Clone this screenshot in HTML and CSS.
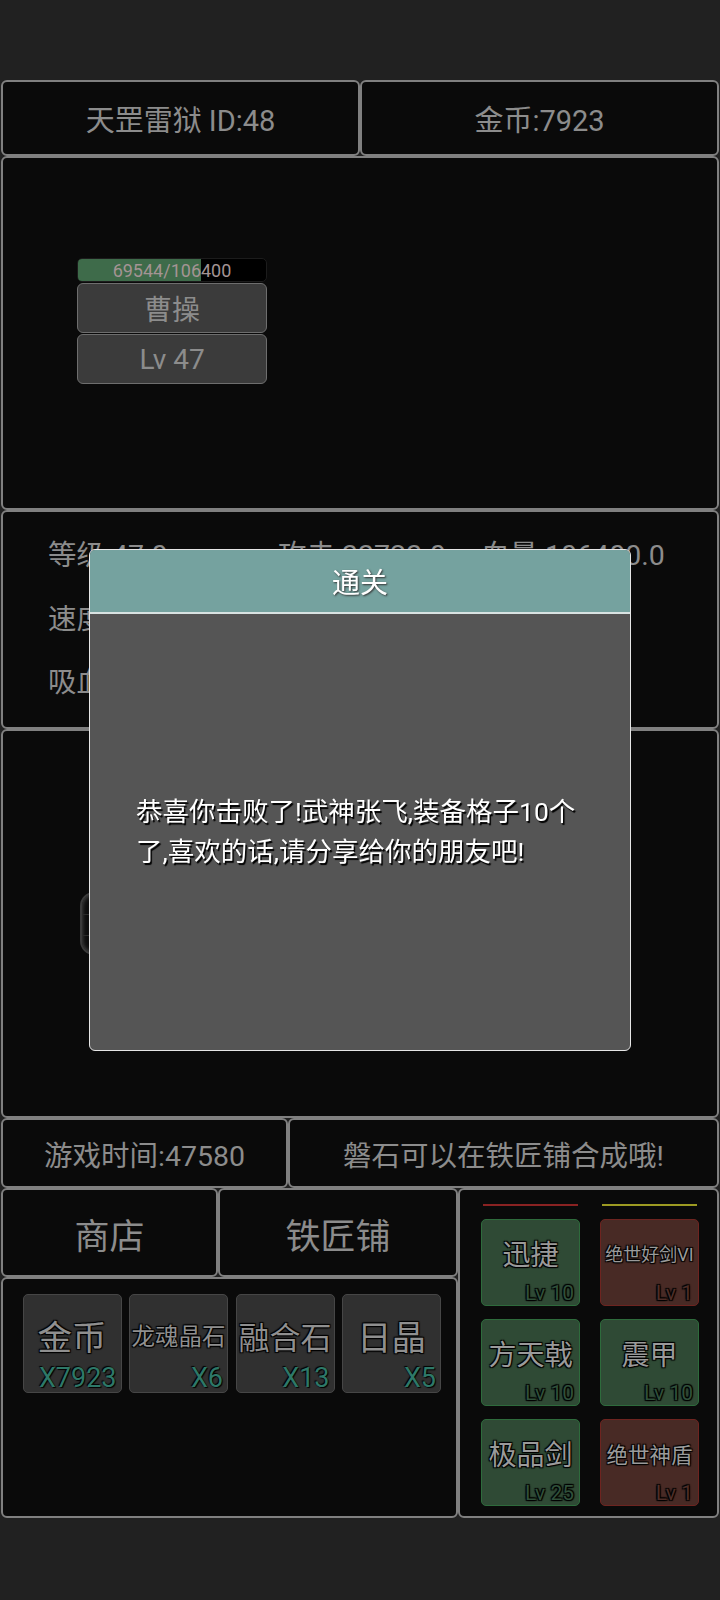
FILE: index.html
```html
<!DOCTYPE html>
<html lang="zh-CN">
<head>
    <meta charset="UTF-8">
    <meta name="viewport" content="width=device-width, initial-scale=1.0">
    <title>通关</title>
    <link rel="stylesheet" href="styles.css">
</head>
<body>

    <div class="top-gap"></div>

    <div class="game">
        <!-- 顶部信息 -->
        <div class="header">
            <div class="box cell">天罡雷狱 ID:48</div>
            <div class="box cell">金币:7923</div>
        </div>

        <!-- 战斗区 -->
        <div class="box battle">
            <div class="enemy">
                <div class="hp">
                    <div class="hp-fill" style="width: 65.4%"></div>
                    <div class="hp-text">69544/106400</div>
                </div>
                <div class="tag">曹操</div>
                <div class="tag">Lv 47</div>
            </div>
        </div>

        <!-- 属性 -->
        <div class="box stats">
            <div class="stat">等级 47.0</div>
            <div class="stat">攻击 33723.0</div>
            <div class="stat">血量 106400.0</div>
            <div class="stat">速度 12.0</div>
            <div class="stat">暴击 5.0</div>
            <div class="stat"></div>
            <div class="stat">吸血 3.0</div>
            <div class="stat">闪避 2.0</div>
            <div class="stat"></div>
        </div>

        <div class="box field">
            <div class="skill-slot">
                <div class="slot-line"></div>
            </div>
        </div>

        <div class="info">
            <div class="box cell time">游戏时间:47580</div>
            <div class="box cell tip">磐石可以在铁匠铺合成哦!</div>
        </div>

        <div class="bottom">
            <div class="left-col">
                <div class="buttons">
                    <div class="box btn shop">商店</div>
                    <div class="box btn smith">铁匠铺</div>
                </div>
                <div class="box bag">
                    <div class="item">
                        <div class="item-name n2">金币</div>
                        <div class="item-count">X7923</div>
                    </div>
                    <div class="item">
                        <div class="item-name n4">龙魂晶石</div>
                        <div class="item-count">X6</div>
                    </div>
                    <div class="item">
                        <div class="item-name n3">融合石</div>
                        <div class="item-count">X13</div>
                    </div>
                    <div class="item">
                        <div class="item-name n2">日晶</div>
                        <div class="item-count">X5</div>
                    </div>
                </div>
            </div>

            <div class="box equip">
                <div class="equip-lines">
                    <div class="line red"></div>
                    <div class="line yellow"></div>
                </div>
                <div class="equip-grid">
                    <div class="card green">
                        <div class="card-name">迅捷</div>
                        <div class="card-lv">Lv 10</div>
                    </div>
                    <div class="card red">
                        <div class="card-name small">绝世好剑VI</div>
                        <div class="card-lv">Lv 1</div>
                    </div>
                    <div class="card green">
                        <div class="card-name">方天戟</div>
                        <div class="card-lv">Lv 10</div>
                    </div>
                    <div class="card green">
                        <div class="card-name">震甲</div>
                        <div class="card-lv">Lv 10</div>
                    </div>
                    <div class="card green">
                        <div class="card-name">极品剑</div>
                        <div class="card-lv">Lv 25</div>
                    </div>
                    <div class="card red">
                        <div class="card-name mid">绝世神盾</div>
                        <div class="card-lv">Lv 1</div>
                    </div>
                </div>
            </div>
        </div>
    </div>

    <!-- 通关弹窗 -->
    <div class="overlay">
        <div class="dialog">
            <div class="dialog-title">通关</div>
            <div class="dialog-body">
                <p>恭喜你击败了!武神张飞,装备格子10个了,喜欢的话,请分享给你的朋友吧!</p>
            </div>
        </div>
    </div>

</body>
</html>
```

FILE: styles.css
```css
* {
    box-sizing: border-box;
}

body {
    margin: 0;
    width: 720px;
    height: 1600px;
    background: #212121;
    font-family: Roboto, "Noto Sans CJK SC", sans-serif;
    color: #8c8c8c;
}

.top-gap {
    height: 80px;
}

.game {
    padding: 0 1px;
}

.box {
    background: #0a0a0a;
    border: 2px solid #808080;
    border-radius: 6px;
}

.cell {
    display: flex;
    justify-content: center;
    align-items: center;
}

.header {
    display: flex;
    height: 76px;
    font-size: 29px;
}

.header .cell {
    flex: 1;
}

/* 战斗区 */
.battle {
    height: 354px;
    padding: 100px 0 0 74px;
}

.enemy {
    width: 190px;
}

.hp {
    position: relative;
    height: 24px;
    background: #000;
    border: 1px solid #1c1c1c;
    border-radius: 5px;
    overflow: hidden;
}

.hp-fill {
    height: 100%;
    background: #3e6b4a;
}

.hp-text {
    position: absolute;
    top: 0;
    left: 0;
    right: 0;
    bottom: 0;
    text-align: center;
    line-height: 23px;
    font-size: 18px;
    color: #a49494;
}

.tag {
    height: 50px;
    margin-top: 1px;
    background: #3b3b3b;
    border: 1.5px solid #6e6e6e;
    border-radius: 6px;
    display: flex;
    justify-content: center;
    align-items: center;
    font-size: 28px;
}

/* 属性 */
.stats {
    height: 219px;
    padding: 9px 0 0 45px;
    display: grid;
    grid-template-columns: 230px 203px auto;
    grid-auto-rows: 63.5px;
    align-items: center;
    font-size: 28.5px;
}

.field {
    height: 389px;
    padding: 161px 0 0 77px;
}

.skill-slot {
    width: 300px;
    height: 63px;
    background: #0d0d0d;
    border: 2px solid #3a3a3a;
    border-radius: 14px;
    box-shadow: inset 0 0 5px #555;
    padding-top: 20px;
}

.slot-line {
    height: 22px;
    border-top: 1px solid #2a2a2a;
    border-bottom: 1px solid #2a2a2a;
}

.info {
    display: flex;
    height: 70px;
    font-size: 28.5px;
}

.time {
    width: 287px;
}

.tip {
    flex: 1;
}

/* 底部 */
.bottom {
    display: flex;
    height: 330px;
}

.left-col {
    width: 457px;
    display: flex;
    flex-direction: column;
}

.buttons {
    display: flex;
    height: 89px;
}

.btn {
    display: flex;
    justify-content: center;
    align-items: center;
    font-size: 35px;
    padding-top: 2px;
}

.shop {
    width: 217px;
}

.smith {
    flex: 1;
}

.bag {
    flex: 1;
    display: flex;
    align-items: flex-start;
    gap: 7.5px;
    padding: 15px 0 0 19.5px;
}

.item {
    width: 99px;
    height: 98.5px;
    background: #303030;
    border: 1px solid #464646;
    border-radius: 5px;
    display: flex;
    flex-direction: column;
    padding: 19px 4px 0 0;
}

.item-name {
    height: 42px;
    display: flex;
    justify-content: center;
    align-items: center;
    white-space: nowrap;
    color: #8f8f8f;
    text-shadow: 1px 1px 1px #000, -1px -1px 1px #000, 1px -1px 1px #000, -1px 1px 1px #000;
    padding-left: 4px;
}

.n2 {
    font-size: 34.5px;
}

.n3 {
    font-size: 31px;
}

.n4 {
    font-size: 23.5px;
}

.item-count {
    margin-top: auto;
    text-align: right;
    font-size: 27px;
    line-height: 27px;
    color: #2e7868;
    white-space: nowrap;
    text-shadow: 1px 1px 1px #000, -1px -1px 1px #000;
}

/* 装备 */
.equip {
    flex: 1;
    padding: 14px 0 0 21px;
}

.equip-lines {
    display: grid;
    grid-template-columns: 99px 99px;
    column-gap: 20px;
}

.line {
    height: 2px;
    margin: 0 2px;
}

.line.red {
    background: #8a2222;
}

.line.yellow {
    background: #9c9a22;
}

.equip-grid {
    margin-top: 13px;
    display: grid;
    grid-template-columns: 99px 99px;
    grid-auto-rows: 86.5px;
    gap: 13.5px 20px;
}

.card {
    border-radius: 5px;
    display: flex;
    flex-direction: column;
    padding: 18px 5px 1px;
}

.card.green {
    background: #2f4a35;
    border: 1.5px solid #2e6b3c;
}

.card.red {
    background: #482a25;
    border: 1.5px solid #6e2420;
}

.card-name {
    height: 30px;
    display: flex;
    justify-content: center;
    align-items: center;
    white-space: nowrap;
    font-size: 28px;
    color: #9a9a9a;
    text-shadow: 1px 1px 1px #000, -1px -1px 1px #000, 1px -1px 1px #000, -1px 1px 1px #000;
}

.card-name.small {
    font-size: 18px;
}

.card-name.mid {
    font-size: 21.5px;
}

.card-lv {
    margin-top: auto;
    text-align: right;
    font-size: 21px;
    line-height: 21px;
    text-shadow: 1px 1px 1px #000, -1px -1px 1px #000, 1px -1px 1px #000, -1px 1px 1px #000;
}

.green .card-lv {
    color: #30503a;
}

.red .card-lv {
    color: #4e2e28;
}

/* 弹窗 */
.overlay {
    position: fixed;
    top: 0;
    left: 0;
    width: 720px;
    height: 1600px;
    display: flex;
    justify-content: center;
    align-items: center;
}

.dialog {
    width: 542px;
    height: 502px;
    background: #555;
    border: 1.5px solid #e6e6e6;
    border-radius: 6px;
    display: flex;
    flex-direction: column;
    overflow: hidden;
}

.dialog-title {
    height: 64px;
    background: #75a29f;
    border-bottom: 2px solid #d9e3e2;
    display: flex;
    justify-content: center;
    align-items: center;
    font-size: 28px;
    color: #fff;
    text-shadow: 1px 1px 2px #333;
}

.dialog-body {
    flex: 1;
    display: flex;
    align-items: center;
    padding: 0 46px;
}

.dialog-body p {
    margin: 0;
    font-size: 26.5px;
    line-height: 40px;
    color: #fff;
    text-shadow: 1.5px 1.5px 1px #000;
}
```
